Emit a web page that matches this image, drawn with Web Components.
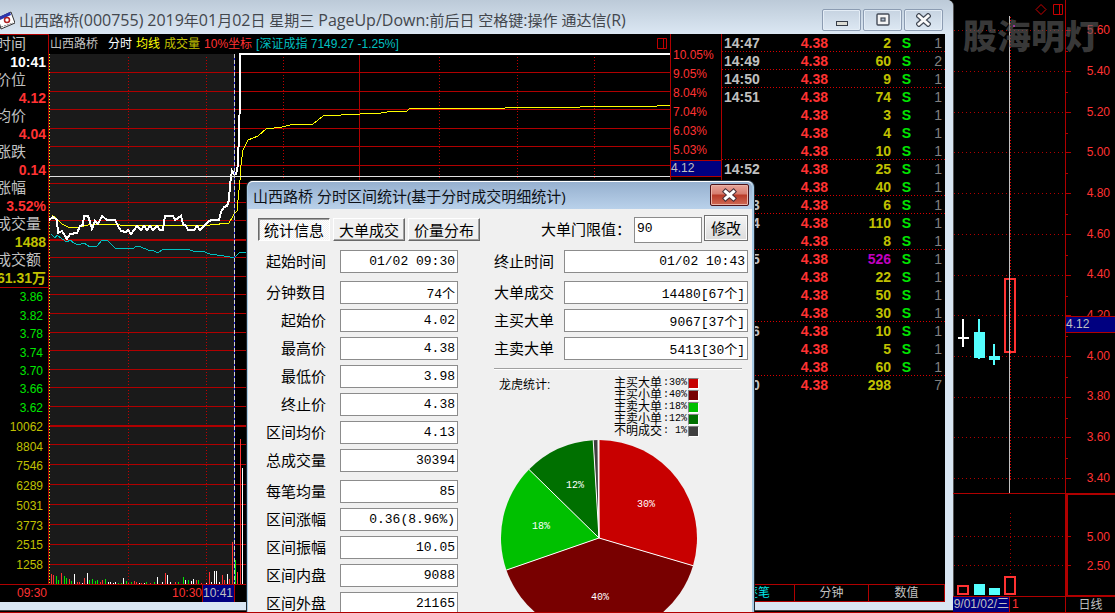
<!DOCTYPE html>
<html lang="zh-CN">
<head>
<meta charset="utf-8">
<title>山西路桥 分时区间统计</title>
<style>
  html, body { height: 100%; margin: 0; background: #000; overflow: hidden; }
  body { font-family: "Liberation Sans", "Noto Sans CJK SC", sans-serif; font-size: 12px; color: #c0c0c0; }
</style>
</head>
<body>
<stock-desktop>
  <app-window slot="window" heading="山西路桥(000755) 2019年01月02日 星期三 PageUp/Down:前后日 空格键:操作 通达信(R)">
    <quote-panel slot="side"></quote-panel>
    <minute-chart slot="chart"></minute-chart>
    <time-axis slot="time"></time-axis>
    <percent-axis slot="axis"></percent-axis>
    <tick-list slot="ticks"></tick-list>
  </app-window>
  <day-chart slot="day"></day-chart>
  <stats-dialog slot="dialog" heading="山西路桥 分时区间统计(基于分时成交明细统计)"></stats-dialog>
</stock-desktop>

<script>
class Base extends HTMLElement {
  constructor() { super(); this.attachShadow({ mode: 'open' }); }
  connectedCallback() {
    this.shadowRoot.innerHTML = '<style>*{box-sizing:border-box}:host{display:block;box-sizing:border-box}' + this.css() + '</style>' + this.html();
  }
}

customElements.define('stock-desktop', class extends Base {
  css() { return `
    :host { position: relative; display: grid; grid-template-columns: minmax(0, 1fr) 162px; grid-template-rows: minmax(0, 1fr); height: 100%; border-bottom: 1px solid #b00000; overflow: hidden; }
    ::slotted([slot=window]) { margin: 0 0 2px -14px; }
    ::slotted([slot=dialog]) { position: absolute; left: 247px; top: 181px; }`; }
  html() { return '<slot name="window"></slot><slot name="day"></slot><slot name="dialog"></slot>'; }
});

customElements.define('app-window', class extends Base {
  css() { return `
    :host { display: flex; flex-direction: column; min-width: 0; background: #d9e6f3; border-radius: 0 6px 0 0; box-shadow: 0 1px #444, 1px 0 #555; }
    header { display: flex; align-items: center; gap: 4px; height: 34px; flex: none; padding: 5px 10px 0 12px; border-radius: 0 6px 0 0; background: linear-gradient(#bccad8, #dbe7f3); }
    h1 { flex: 1; min-width: 0; margin: 0; overflow: hidden; white-space: nowrap; font: 15px/24px "Open Sans", "Noto Sans CJK SC", sans-serif; color: #43474d; }
    h1 span { font-size: 16px; }
    .ctl { display: flex; gap: 2px; }
    button { display: grid; place-items: center; width: 39px; height: 22px; padding: 0; border: 1px solid #8c9cb2; border-radius: 2px; background: linear-gradient(#c6d3e1, #dde8f3); box-shadow: inset 0 0 0 1px #e4edf6; }
    .body { flex: 1; min-height: 0; display: grid; grid-template-columns: 55px minmax(0, 1fr) 51px 223px; grid-template-rows: minmax(0, 1fr) 18px; margin: 0 8px; background: #000; overflow: hidden; }
    .bottom { height: 8px; flex: none; }
    ::slotted([slot=time]) { grid-column: 1 / 3; grid-row: 2; }
    ::slotted([slot=side]) { grid-area: 1 / 1; }
    ::slotted([slot=chart]) { grid-area: 1 / 2; }
    ::slotted([slot=axis]) { grid-area: 1 / 3 / 3 / 4; }
    ::slotted([slot=ticks]) { grid-area: 1 / 4 / 3 / 5; }`; }
  html() { return `
    <header>
      <svg width="17" height="20" viewBox="0 0 17 20" aria-hidden="true"><path d="M0 8L13 2l4 11L3 19z" fill="#fff" stroke="#333"/><path d="M1 7L12 2l1 3L2 10z" fill="#2a36b0"/><circle cx="9" cy="10" r="2.5" fill="none" stroke="#b02020" stroke-width="1.5"/><path d="M3 17l12-4" stroke="#777" stroke-dasharray="2 1"/></svg>
      <h1>${this.getAttribute('heading').replace(/[\x21-\x7e]+/g, '<span>$&</span>')}</h1>
      <div class="ctl">
        <button aria-label="最小化"><svg width="14" height="14"><rect x="1.500" y="8.500" width="11" height="4" fill="#dcdcd4" stroke="#353c48"/></svg></button>
        <button aria-label="还原"><svg width="14" height="14"><rect x="1" y="1" width="12" height="11" rx="1" fill="#f4f4f4" stroke="#454c58" stroke-width="1.4"/><rect x="5" y="5" width="4" height="3" fill="#aebccd" stroke="#454c58" stroke-width="1.2"/></svg></button>
        <button aria-label="关闭"><svg width="15" height="14" viewBox="0 0 15 14"><path d="M3 3l9 8M12 3l-9 8" stroke="#454c58" stroke-width="5.4" stroke-linecap="square"/><path d="M3 3l9 8M12 3l-9 8" stroke="#fafafa" stroke-width="3" stroke-linecap="square"/></svg></button>
      </div>
    </header>
    <div class="body"><slot name="side"></slot><slot name="chart"></slot><slot name="axis"></slot><slot name="ticks"></slot><slot name="time"></slot></div>
    <div class="bottom"></div>`; }
});

customElements.define('quote-panel', class extends Base {
  css() { return `
    :host { display: flex; flex-direction: column; min-height: 0; border-top: 1px solid #b00000; border-right: 1px solid #b00000; white-space: nowrap; }
    dl { margin: 0; padding: 0 2px; border-bottom: 1px solid #b00000; flex: none; }
    dt, dd { margin: 0; height: 18px; line-height: 18px; }
    dt { font-size: 15px; color: #c0c0c0; }
    dd { display: flex; justify-content: flex-end; font-size: 14px; font-weight: bold; color: #ff3232; }
    .white { color: #fff; } .gold { color: #c0c000; }
    .axis { display: grid; grid-auto-rows: 1fr; align-items: center; justify-items: end; padding-right: 5px; line-height: 18px; min-height: 0; }
    .price { flex: 130 1 0; color: #00e600; }
    .vol { flex: 159 1 0; color: #c0c000; margin-bottom: 9px; }`; }
  html() {
    const q = [['时间', '10:41', 'white'], ['价位', '4.12', ''], ['均价', '4.04', ''], ['涨跌', '0.14', ''], ['涨幅', '3.52%', ''], ['成交量', '1488', 'gold'], ['成交额', '61.31万', 'gold']];
    return '<dl>' + q.map(r => `<dt>${r[0]}</dt><dd class="${r[2]}">${r[1]}</dd>`).join('') + '</dl>' +
      '<div class="axis price">' + '3.86 3.82 3.78 3.74 3.70 3.66 3.62'.split(' ').map(v => `<span>${v}</span>`).join('') + '</div>' +
      '<div class="axis vol">' + '10062 8804 7546 6289 5031 3773 2515 1258'.split(' ').map(v => `<span>${v}</span>`).join('') + '</div>';
  }
});

customElements.define('minute-chart', class extends Base {
  css() { return `
    :host { display: flex; flex-direction: column; min-width: 0; min-height: 0; border-right: 1px solid #b00000; }
    header { display: flex; align-items: center; height: 19px; flex: none; padding: 0 2px 0 1px; gap: 4px; white-space: nowrap; line-height: 18px; }
    .name { margin-right: 6px; } .w { color: #fff; } .y { color: #ff0; } .g { color: #c0c000; } .r { color: #ff3232; } .c { color: #00c0c0; margin-right: auto; }
    .plot { display: block; flex: 1; width: 100%; min-height: 0; }`; }
  html() {
    // Coordinates of the plot: x from 49, y from 53, one unit per pixel.
    const rows = [72, 91, 109, 128, 146, 165, 183, 202, 220, 257, 276, 294, 313, 332, 350, 369, 387, 406, 444, 464, 484, 504, 524, 544, 564];
    const bars = '51,10,r 53,9,r 56,8,g 58,4,g 61,11,r 64,8,g 66,6,g 69,5,r 71,3,g 74,10,w 77,2,r 79,2,r 82,1,w 84,6,r 87,11,w 89,4,g 92,5,g 95,3,g 97,4,g 100,2,r 102,4,r 105,5,g 108,2,w 110,2,w 113,1,w 115,2,w 118,1,g 121,1,g 123,6,w 126,3,g 128,1,r 131,2,g 134,3,r 136,2,r 139,1,w 141,1,r 144,1,w 146,2,g 150,1,r 154,2,g 157,7,w 162,2,w 165,11,r 167,9,w 170,2,w 175,2,r 178,2,g 183,7,g 185,4,w 188,4,g 191,3,w 193,5,w 196,4,r 198,4,g 201,1,r 206,1,w 209,12,r 211,2,w 214,13,w 216,13,w 219,2,w 222,9,r 224,4,r 227,10,w 229,5,r 232,42,r 235,24,g 237,12,r 240,145,r 242,116,w'.split(' ');
    const col = { r: '#ff3232', g: '#00e600', w: '#fff' };
    return `<header><span class="name">山西路桥</span><span class="w">分时</span><span class="y">均线</span><span class="g">成交量</span><span class="r">10%坐标</span><span class="c">[深证成指 7149.27 -1.25%]</span>
      <svg width="11" height="12" aria-hidden="true"><path d="M.5.5h9v10h-9zM6.5.5v10" fill="none" stroke="#c00000"/></svg></header>
    <svg class="plot" viewBox="49 53 621 531" preserveAspectRatio="none" shape-rendering="crispEdges" fill="none" role="img" aria-label="分时走势">
      <rect x="49" y="54" width="186" height="530" fill="#1a1a1a"/>
      <path stroke="#b00000" d="${rows.map(y => `M49 ${y + .5}H670`).join('')}"/>
      <path stroke="#b00000" stroke-width="2" d="M49 240H670M49 426H670"/>
      <path stroke="#c00000" stroke-dasharray="1 2" d="M128.5 57V584M206.5 57V584M283.5 57V584M439.5 57V584M517.5 57V584M594.5 57V584"/>
      <path stroke="#b00000" d="M359.5 54V584"/>
      <path stroke="#ff0" stroke-dasharray="1 2" d="M49.5 54V584"/>
      ${bars.map(b => { const [x, h, c] = b.split(','); return `<path stroke="${col[c]}" d="M${+x + .5} 584v-${h}"/>`; }).join('')}
      <polyline stroke="#00c0c0" points="51,234 55,238 57,235 62,239 67,242 70,240 74,243 78,245 84,243 90,247 97,246 102,240 108,241 115,248 132,249 137,246 141,247 148,250 154,251 158,253 162,250 170,249 190,250 196,252 202,251 210,254 224,256 230,257 235,257 240,252 248,252"/>
      <polyline stroke="#ff0" points="52,215 57,219 62,224 68,227 80,227 88,225 104,224 120,225 210,225 229,223 235,213 237,211 238,200 240,180 241,165 243,150 248,140 258,136 266,129 282,127 290,125 313,124 323,116 360,114 381,113 393,111 407,111 410,108 505,108 506,107 580,107 581,106 657,106 658,105 670,105"/>
      <polyline stroke="#fff" stroke-width="2" points="49,220 53,217 57,220 58,233 62,231 65,236 67,239 70,234 77,233 80,226 83,225 84,216 88,216 90,222 92,229 95,221 98,224 102,216 107,220 115,220 118,226 121,231 126,232 128,230 131,234 134,230 137,226 141,230 144,226 147,230 150,226 153,230 157,226 160,230 163,230 165,216 173,216 175,220 178,218 181,216 183,224 186,226 188,230 194,230 197,226 200,230 204,226 208,222 211,220 219,220 221,212 224,207 227,206 229,200 230,185 232,171 234,174 236,174 238,165 239,130 240,100 240,54 670,54"/>
      <path stroke="#e0e0e0" d="M49 176.5H670"/>
      <path stroke="#2020d0" d="M234.5 54V584"/><path stroke="#d0d0d0" stroke-dasharray="4 2" d="M234.5 54V584"/>
    </svg>`;
  }
});

customElements.define('time-axis', class extends Base {
  css() { return `
    :host { display: flex; min-width: 0; line-height: 16px; border-top: 1px solid #b00000; border-right: 1px solid #b00000; color: #ff3232; }
    span { width: 30px; } .first { margin: 0 125px 0 23px; }
    output { width: 33px; background: #000080; color: #c0c0c0; border: solid #b00000; border-width: 0 1px; }`; }
  html() { return '<span class="first">09:30</span><span>10:30</span><output>10:41</output>'; }
});

customElements.define('percent-axis', class extends Base {
  css() { return `
    :host { border-right: 1px solid #b00000; padding-top: 12px; color: #ff3232; }
    .rows { display: grid; grid-auto-rows: 18px; row-gap: 1px; padding-left: 2px; line-height: 18px; margin-bottom: 1px; }
    output { display: block; height: 17px; line-height: 15px; background: #000080; color: #c0c0c0; border: solid #b00000; border-width: 1px 0; }`; }
  html() { return '<div class="rows">' + '10.05% 9.05% 8.04% 7.04% 6.03% 5.03%'.split(' ').map(v => `<span>${v}</span>`).join('') + '</div><output>4.12</output>'; }
});

customElements.define('tick-list', class extends Base {
  css() { return `
    :host { display: flex; flex-direction: column; min-height: 0; }
    table { width: 100%; table-layout: fixed; border-collapse: collapse; font-size: 14px; font-weight: bold; line-height: 18px; }
    td { height: 18px; padding: 0; text-align: right; }
    td:nth-child(1) { text-align: left; padding-left: 2px; width: 59px; }
    td:nth-child(2) { color: #ff3232; width: 47px; } td:nth-child(3) { color: #c0c000; width: 63px; }
    td:nth-child(4) { color: #00e600; width: 20px; } td:nth-child(5) { color: #808080; font-weight: normal; padding-right: 3px; }
    .end { background: repeating-linear-gradient(90deg, #d80000 0 1px, #000 1px 3px) 0 100% / 300px 1px no-repeat; }
    .big td:nth-child(3) { color: #c000c0; }
    nav { display: grid; grid-template-columns: 72px 74px 1fr; height: 18px; flex: none; margin-top: auto; border: solid #b00000; border-width: 1px 1px 1px 0; }
    button { font: inherit; color: #c0c0c0; background: none; border: 0; padding: 0; line-height: 16px; }
    button + button { border-left: 1px solid #b00000; } .on { color: #00e6e6; }`; }
  html() {
    const t = '14:47,2,1,e|14:49,60,2,e|14:50,9,1,e|14:51,74,1|,3,1|,4,1|,10,1,e|14:52,25,1|,40,1,e|14:53,6,1,e|14:54,110,1|,8,1,e|14:55,526,1|,22,1|,50,1|,30,1,e|14:56,10,1|,5,1|,60,1,e|15:00,298,7'.split('|').map(r => r.split(','));
    return '<table><tbody>' + t.map(([a, v, n, e]) => `<tr class="${e ? 'end' : ''}${v === '526' ? ' big' : ''}"><td>${a}</td><td>4.38</td><td>${v}</td><td>${v === '298' ? '' : 'S'}</td><td>${n}</td></tr>`).join('') +
      '</tbody></table><nav><button class="on">逐笔</button><button>分钟</button><button>数值</button></nav>';
  }
});

customElements.define('day-chart', class extends Base {
  css() { return `
    :host { position: relative; display: grid; grid-template-columns: minmax(0, 1fr) 49px; grid-template-rows: minmax(0, 1fr) 15px; min-height: 0; overflow: hidden; color: #ff3232; line-height: 18px; }
    .plot { grid-area: 1 / 1 / 2 / 3; width: 100%; height: 100%; min-height: 0; display: block; }
    .labels { grid-area: 1 / 2; display: flex; flex-direction: column; min-height: 0; padding: 10px 5px 0 0; }
    .price, .vol { display: grid; grid-auto-rows: 1fr; align-items: center; justify-items: end; min-height: 0; }
    .price { flex: 488 1 0; } .vol { flex: 58 1 0; margin: 24px 0 17px; }
    .mark { position: absolute; left: 10px; top: 12px; font: 900 34px/46px "Noto Sans CJK SC", sans-serif; color: rgba(90, 90, 90, .65); white-space: nowrap; }
    .tag { position: absolute; left: 113px; right: 0; top: 316px; height: 17px; line-height: 15px; background: #000080; color: #c0c0c0; border: solid #b00000; border-width: 1px 0; }
    .date { grid-area: 2 / 1; display: grid; grid-template-columns: 57px 1fr; gap: 2px; line-height: 14px; border-right: 1px solid #b00000; }
    .date output { display: flex; justify-content: flex-end; overflow: hidden; background: #000080; color: #c0c0c0; border-right: 1px solid #b00000; white-space: nowrap; }
    .kind { grid-area: 2 / 2; font: inherit; line-height: 14px; color: #c0c0c0; background: none; border: 0; padding: 0; }`; }
  html() {
    const g = [30, 71, 112, 152, 193, 234, 275, 315, 356, 397, 437, 478];
    return `
    <svg class="plot" viewBox="953 0 162 597" preserveAspectRatio="none" shape-rendering="crispEdges" fill="none" role="img" aria-label="日线">
      <path stroke="#b00000" stroke-dasharray="1 3" d="${g.concat(536, 565).map(y => `M954 ${y + .5}H1065`).join('')}M1010.5 513V575"/>
      <path stroke="#e00000" stroke-dasharray="1 2" d="M1010.5 17V480"/>
      <path stroke="#b00000" d="${g.concat(536, 565).map(y => `M1065 ${y + .5}h6`).join('')}${g.slice(0, 11).concat(530).map(y => `M1065 ${y + 21.5}h3`).join('')}M1065.5 0V597M953 493.5H1065M953 596.5H1115"/>
      <path stroke="#b00000" stroke-width="2" d="M1115 494H1067V596H1115"/>
      <path stroke="#c80000" shape-rendering="auto" d="M1041 4.500l5 5-5 5-5-5zM1053.500 4.500h9v10h-9zM1059.500 4.500v10"/>
      <rect x="1013" y="25" width="2" height="2" fill="#f0f"/>
      <path fill="#fff" d="M962 319h2v28h-2zM958 337h11v2h-11z"/>
      <path fill="#54ffff" d="M978 319h2v40h-2zM974 332h11v26h-11zM993 344h2v21h-2zM989 356h11v4h-11zM974 584h11v11h-11zM989 588h11v7h-11z"/>
      <path stroke="#ff3232" stroke-width="2" d="M1005 279h10v73h-10zM958 586h10v8h-10zM1005 577h10v17h-10z"/>
      <path stroke="#c0c0c0" d="M1009.5 16V493"/>
    </svg>
    <div class="labels"><div class="price">${'5.60 5.40 5.20 5.00 4.80 4.60 4.40 4.20 4.00 3.80 3.60 3.40'.split(' ').map(v => `<span>${v}</span>`).join('')}</div><div class="vol"><span>5.00</span><span>2.50</span></div></div>
    <div class="mark">股海明灯</div><output class="tag">4.12</output>
    <div class="date"><output>9/01/02/三</output><span>1</span></div><button class="kind">日线</button>`;
  }
});

customElements.define('stat-field', class extends Base {
  css() { return `
    :host { display: grid; grid-template-columns: 68px minmax(0, 1fr); column-gap: 14px; align-items: center; height: 23px; }
    :host([wide]) { grid-template-columns: 60px minmax(0, 1fr); column-gap: 10px; }
    label { text-align: right; font-size: 15px; line-height: 22px; white-space: nowrap; color: #000; }
    input { width: 100%; height: 23px; padding: 0 2px; border: 1px solid #8c8c8c; background: #fff; color: #000; text-align: right; font: 13px "Liberation Mono", "Noto Sans CJK SC", monospace; }`; }
  html() { return `<label for="v">${this.getAttribute('label')}</label><input id="v" readonly value="${this.getAttribute('value')}">`; }
});

customElements.define('share-pie', class extends Base {
  css() { return `
    .top { display: flex; justify-content: space-between; padding: 7px 49px 0 5px; color: #000; }
    .top p { margin: 0; line-height: 16px; }
    ul { margin: 0; padding: 0; list-style: none; }
    li { display: grid; grid-template-columns: 48px 24px 11px; column-gap: 1px; align-items: center; height: 12px; line-height: 12px; white-space: nowrap; }
    .n { font: 10px/12px "Liberation Mono", monospace; white-space: pre; }
    i { width: 11px; height: 11px; border: 1px solid; border-color: #808080 #fff #fff #808080; }
    svg { display: block; margin: 3px 0 0 7px; font: 10px "Liberation Mono", monospace; }`; }
  html() {
    const L = [['主买大单', ':30%', '#c80000'], ['主买小单', ':40%', '#780000'], ['主卖大单', ':18%', '#00c000'], ['主卖小单', ':12%', '#007000'], ['不明成交', ': 1%', '#404040']];
    const A = [0, 106.4, 250.9, 314.4, 356.6, 359.4], R = 98;
    const pt = a => { const t = a * Math.PI / 180; return (98 + R * Math.sin(t)).toFixed(2) + ' ' + (98 - R * Math.cos(t)).toFixed(2); };
    const slice = (a, b, c) => `<path d="M98 98L${pt(a)}A${R} ${R} 0 0 1 ${pt(b)}z" fill="${c}"/>`;
    return `<div class="top"><p>龙虎统计:</p><ul>${L.map(l => `<li><span>${l[0]}</span><span class="n">${l[1]}</span><i style="background:${l[2]}"></i></li>`).join('')}</ul></div>
    <svg width="196" height="196" viewBox="0 0 196 196" role="img" aria-label="龙虎统计饼图">
      ${L.map((l, i) => slice(A[i], A[i + 1], l[2])).join('')}
      <path stroke="#fff" fill="none" d="${A.map(a => `M98 98L${pt(a)}`).join('')}"/>
      <g fill="#fff" text-anchor="middle"><text x="145" y="67">30%</text><text x="99" y="160">40%</text><text x="40" y="89">18%</text><text x="74" y="48">12%</text></g>
    </svg>`;
  }
});

customElements.define('stats-dialog', class extends Base {
  css() { return `
    :host { width: 507px; border: solid #a8cbe6; border-width: 0 2px 0 1px; border-radius: 6px 6px 0 0; background: #f0f0f0; color: #000; box-shadow: 0 0 0 1px #202830; }
    header { display: flex; justify-content: space-between; align-items: flex-start; height: 28px; padding: 2px 3px 0 5px; border-top: 1px solid #fff; border-radius: 5px 5px 0 0; background: linear-gradient(#96b0cf, #b9d1ea); }
    h2 { margin: 0; font: 15px/24px "Open Sans", "Noto Sans CJK SC", sans-serif; white-space: nowrap; color: #0c1016; }
    .close { display: grid; place-items: center; width: 39px; height: 22px; padding: 0; border: 1px solid #4c1218; border-radius: 2px; background: linear-gradient(#e8a49a, #d67c6e 45%, #b83a28 50%, #cf6a55); box-shadow: inset 0 0 0 1px #eab4a8; }
    .bar { display: flex; align-items: center; height: 29px; margin: 6px 4px 6px 10px; gap: 3px; }
    button { font: 15px/20px "Noto Sans CJK SC", sans-serif; color: #000; padding: 0; }
    .tab { width: 72px; height: 23px; background: #f0f0f0; border: 1px solid; border-color: #fff #696969 #696969 #fff; box-shadow: inset -1px -1px #a0a0a0; }
    .tab.on { border-color: #696969 #fff #fff #696969; box-shadow: inset 1px 1px #a0a0a0; background: repeating-conic-gradient(#fff 0 25%, #f0f0f0 0 50%) 0 0 / 2px 2px; }
    .bar label { margin-left: auto; font-size: 15px; line-height: 22px; white-space: nowrap; }
    .limit { width: 68px; height: 26px; padding: 0 2px 3px; margin-right: -1px; border: 1px solid #8c8c8c; font: 13px "Liberation Mono", monospace; }
    .edit { width: 44px; height: 26px; margin-bottom: 4px; border: 1px solid #707070; background: linear-gradient(#f4f4f4, #dcdcdc); box-shadow: inset 0 0 0 1px #fcfcfc; }
    .cols { display: grid; grid-template-columns: 200px minmax(0, 1fr); column-gap: 36px; padding: 0 4px 0 10px; align-items: start; }
    .group { display: grid; row-gap: 5px; margin-bottom: 8px; }
    hr { width: 248px; height: 2px; margin: 0; border: 0; border-top: 1px solid #a0a0a0; border-bottom: 1px solid #fff; }`; }
  html() {
    const groups = [[['起始时间', '01/02 09:30']], [['分钟数目', '74个'], ['起始价', '4.02'], ['最高价', '4.38'], ['最低价', '3.98'], ['终止价', '4.38'], ['区间均价', '4.13'], ['总成交量', '30394']], [['每笔均量', '85'], ['区间涨幅', '0.36(8.96%)'], ['区间振幅', '10.05'], ['区间内盘', '9088'], ['区间外盘', '21165']]];
    const right = [[['终止时间', '01/02 10:43']], [['大单成交', '14480[67个]'], ['主买大单', '9067[37个]'], ['主卖大单', '5413[30个]']]];
    const draw = (gs, w) => gs.map(g => `<div class="group">${g.map(f => `<stat-field ${w} label="${f[0]}" value="${f[1]}"></stat-field>`).join('')}</div>`).join('');
    return `<header><h2>${this.getAttribute('heading')}</h2><button class="close" aria-label="关闭"><svg width="15" height="14" viewBox="0 0 15 14"><path d="M3.500 3.500l8 7M11.500 3.500l-8 7" stroke="#4a3038" stroke-width="5" stroke-linecap="square"/><path d="M3.500 3.500l8 7M11.500 3.500l-8 7" stroke="#fff" stroke-width="3" stroke-linecap="square"/></svg></button></header>
    <div class="bar"><button class="tab on">统计信息</button><button class="tab">大单成交</button><button class="tab">价量分布</button><label for="lim">大单门限值：</label><input class="limit" id="lim" value="90"><button class="edit">修改</button></div>
    <div class="cols"><section>${draw(groups, '')}</section><section>${draw(right, 'wide')}<hr><share-pie></share-pie></section></div>`;
  }
});
</script>
</body>
</html>
